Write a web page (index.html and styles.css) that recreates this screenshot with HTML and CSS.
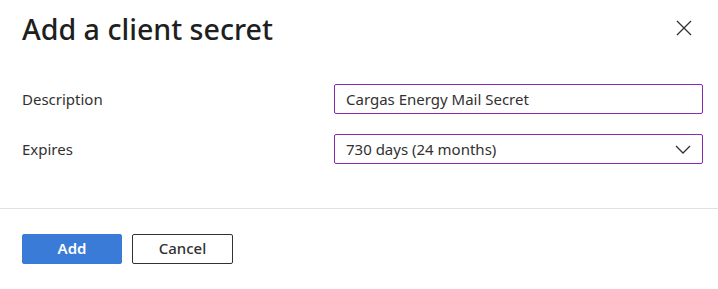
FILE: index.html
```html
<!DOCTYPE html>
<html lang="en">
<head>
<meta charset="UTF-8">
<meta name="viewport" content="width=device-width, initial-scale=1.0">
<title>Add a client secret</title>
<link rel="stylesheet" href="styles.css">
</head>
<body>

<div class="panel">
    <div class="panel-header">
        <h1 class="panel-title">Add a client secret</h1>
        <button class="close-btn" aria-label="Close">
            <svg width="16" height="16" viewBox="0 0 16 16">
                <path d="M1 1 L15 15 M15 1 L1 15" stroke="#323130" stroke-width="1.3" fill="none"/>
            </svg>
        </button>
    </div>

    <div class="form">
        <div class="form-row">
            <label class="form-label">Description</label>
            <input type="text" class="text-box" value="Cargas Energy Mail Secret">
        </div>
        <div class="form-row">
            <label class="form-label">Expires</label>
            <div class="select-box">
                <span>730 days (24 months)</span>
                <svg width="16" height="9" viewBox="0 0 16 9">
                    <path d="M1 1 L8 8 L15 1" stroke="#323130" stroke-width="1.3" fill="none"/>
                </svg>
            </div>
        </div>
    </div>

    <div class="panel-footer">
        <button class="btn btn-primary">Add</button>
        <button class="btn btn-default">Cancel</button>
    </div>
</div>

</body>
</html>
```

FILE: styles.css
```css
/* Blade panel */
body {
    margin: 0;
    background: #fff;
    font-family: "Noto Sans", "Open Sans", sans-serif;
    color: #323130;
}
.panel {
    width: 718px;
}
.panel-header {
    display: flex;
    justify-content: space-between;
    align-items: center;
    padding: 8px 26px 0 22px;
    height: 40px;
}
.panel-title {
    margin: 0;
    font-size: 28.6px;
    font-weight: 500;
    color: #201f1e;
}
.close-btn {
    border: none;
    background: none;
    padding: 0;
    width: 16px;
    height: 16px;
    display: flex;
}
.form {
    padding: 36px 15px 0 22px;
    display: flex;
    flex-direction: column;
    gap: 20px;
}
.form-row {
    display: flex;
    align-items: center;
}
.form-label {
    width: 312px;
    font-size: 15px;
}
.text-box,
.select-box {
    box-sizing: border-box;
    width: 369px;
    height: 30px;
    border: 1px solid #8a2bb3;
    border-radius: 2px;
    padding: 0 11px;
    font-family: inherit;
    font-size: 15px;
    color: #323130;
}
.select-box {
    display: flex;
    align-items: center;
    justify-content: space-between;
}
.panel-footer {
    margin-top: 44px;
    border-top: 1px solid #e1e1e1;
    padding: 25px 22px;
    display: flex;
    gap: 10px;
}
.btn {
    box-sizing: border-box;
    width: 101px;
    height: 30px;
    padding: 0 0 2px;
    border-radius: 2px;
    font-family: inherit;
    font-size: 15px;
    font-weight: 600;
}
.btn-primary {
    width: 100px;
    background: #3a7bd8;
    border: 1px solid #3a7bd8;
    color: #fff;
}
.btn-default {
    background: #fff;
    border: 1px solid #323130;
    color: #323130;
    font-weight: 500;
}
```
